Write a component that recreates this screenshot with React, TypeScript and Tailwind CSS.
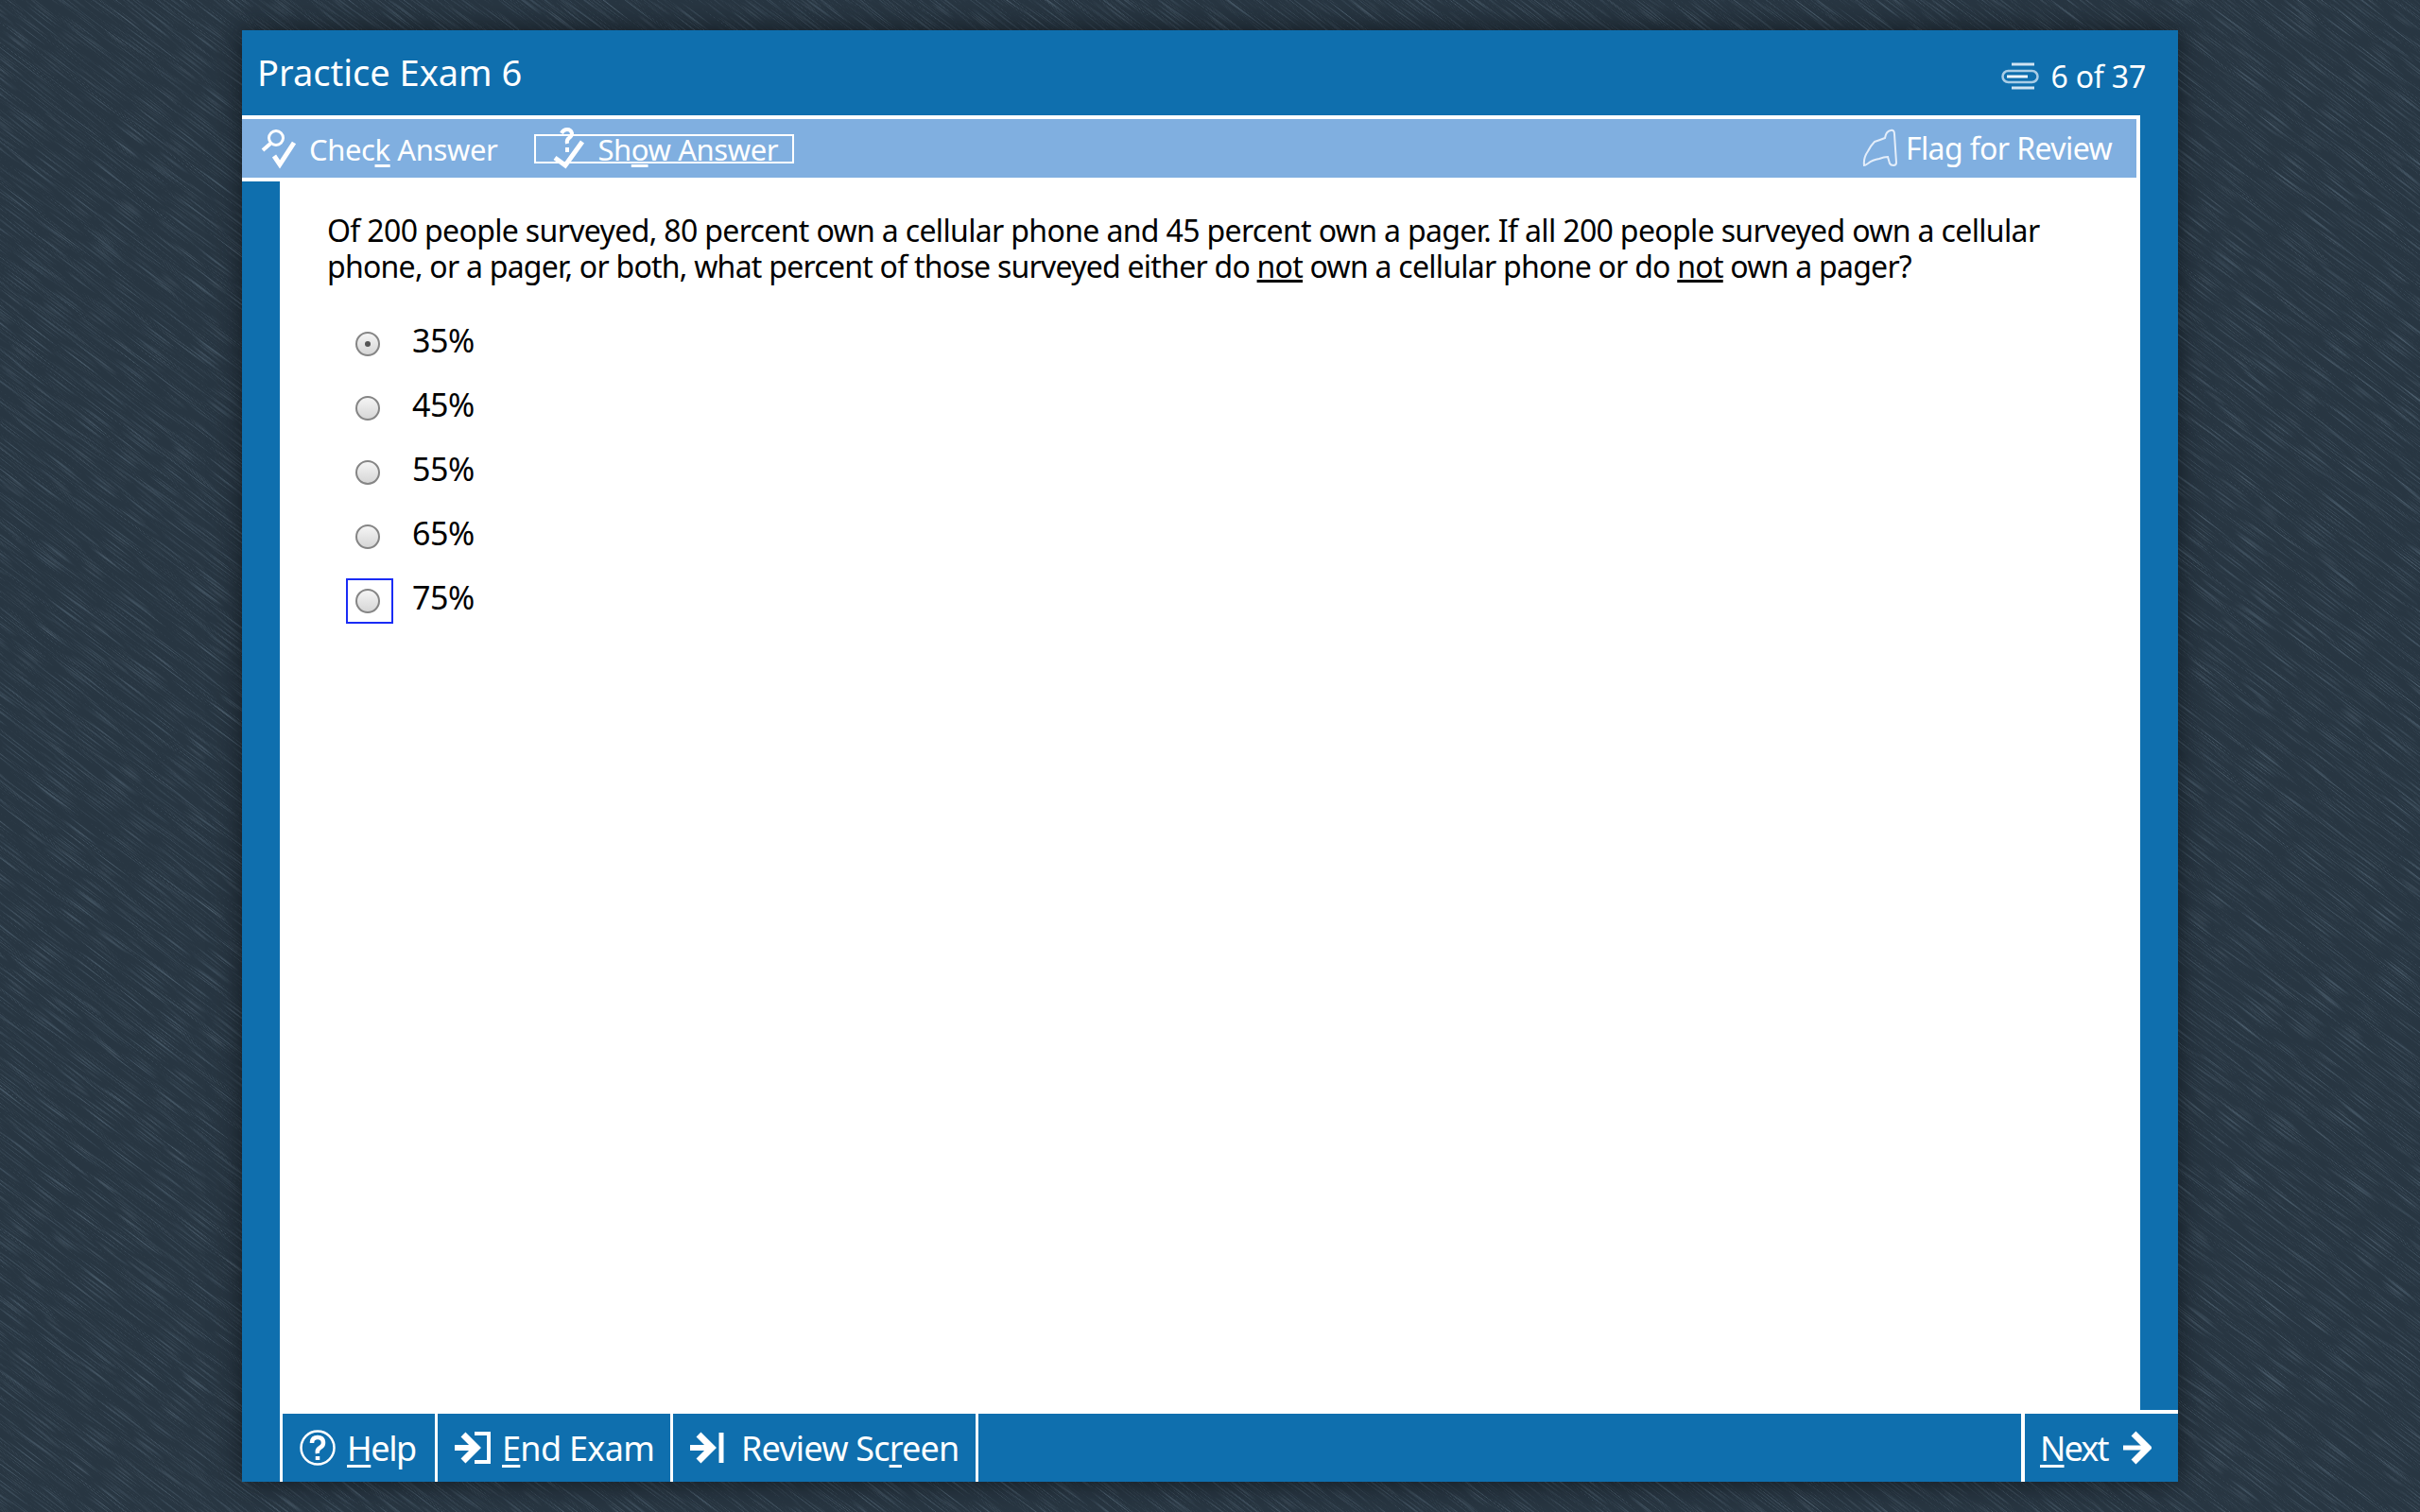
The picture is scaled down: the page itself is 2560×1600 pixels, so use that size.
const FONT = "font-['Noto_Sans','Open_Sans',sans-serif]";

const CHOICES = ["35%", "45%", "55%", "65%", "75%"];

// brushed slate texture behind the exam window
function Backdrop() {
  return (
    <svg className="absolute inset-0 h-full w-full" aria-hidden="true">
      <defs>
        <filter id="streaks" x="0" y="0" width="100%" height="100%">
          <feTurbulence type="fractalNoise" baseFrequency="0.02 0.95" numOctaves="1" seed="7" />
          <feColorMatrix
            type="matrix"
            values="0 0 0 0 0.07  0 0 0 0 0.11  0 0 0 0 0.15  4 0 0 0 -2.1"
          />
        </filter>
        <filter id="glints" x="0" y="0" width="100%" height="100%">
          <feTurbulence type="fractalNoise" baseFrequency="0.025 0.95" numOctaves="1" seed="23" />
          <feColorMatrix
            type="matrix"
            values="0 0 0 0 0.24  0 0 0 0 0.32  0 0 0 0 0.40  3 0 0 0 -1.7"
          />
        </filter>
      </defs>
      <rect width="100%" height="100%" fill="#283642" />
      <g transform="rotate(37 1280 800)">
        <rect x="-800" y="-1400" width="4200" height="4400" filter="url(#streaks)" opacity="0.9" />
        <rect x="-800" y="-1400" width="4200" height="4400" filter="url(#glints)" opacity="0.35" />
      </g>
    </svg>
  );
}

function CheckIcon() {
  return (
    <svg width="40" height="44" viewBox="0 0 40 44" fill="none" stroke="#fff" strokeWidth="3">
      <circle cx="17" cy="11" r="7.5" />
      <path d="M11 17 3 24" strokeWidth="4" />
      <path d="M15 30l6 9L36 16" strokeWidth="5" />
    </svg>
  );
}

function ShowIcon() {
  return (
    <svg width="34" height="44" viewBox="0 0 34 44" fill="none" stroke="#fff">
      <path d="M9 6q2-4 6-4t5 4q0 3-3 5t-2 6" strokeWidth="4" />
      <path d="M15 21v5" strokeWidth="4" />
      <path d="M2 32l11 8L31 15" strokeWidth="5" />
    </svg>
  );
}

function FlagIcon() {
  return (
    <svg width="38" height="42" viewBox="0 0 38 42" fill="none" stroke="#e4eefa" strokeWidth="2">
      <path d="M2 39q-1-8 4-15 3-6 7-10 6-2 11-4 1-7 6-8 4-1 4 4l2 30q0 3-3 3-3 0-4-2l-2-7q-4 0-9 2-7 1-12 5-3 2-4 2Z" />
    </svg>
  );
}

function StackIcon() {
  return (
    <svg width="40" height="30" viewBox="0 0 40 30" fill="none">
      <path d="M11 2h24M11 27h24" stroke="#cfe3f2" strokeWidth="3" />
      <rect x="1.5" y="9" width="37" height="12" rx="6" stroke="#a9cde6" strokeWidth="2.5" />
      <path d="M6 15h22" stroke="#eef6fb" strokeWidth="3" />
    </svg>
  );
}

function HelpIcon() {
  return (
    <svg width="38" height="38" viewBox="0 0 38 38" fill="none" stroke="#fff">
      <circle cx="19" cy="19" r="17.5" strokeWidth="2.5" />
      <path d="M13 14q0-6 6-6t6 6q0 3-3.500 5T19 25" strokeWidth="4.500" />
      <path d="M19 28v4" strokeWidth="4.500" />
    </svg>
  );
}

function EndIcon() {
  return (
    <svg width="38" height="34" viewBox="0 0 38 34" fill="none" stroke="#fff">
      <path d="M0 17h21" strokeWidth="6" />
      <path d="M9 3l14 14L9 31" strokeWidth="7" />
      <path d="M21 2h15v30H21" strokeWidth="4" />
    </svg>
  );
}

function ReviewIcon() {
  return (
    <svg width="36" height="34" viewBox="0 0 36 34" fill="none" stroke="#fff" className="mr-[6px]">
      <path d="M0 17h22" strokeWidth="6" />
      <path d="M9 3l14 14L9 31" strokeWidth="7" />
      <path d="M33 1v32" strokeWidth="5" />
    </svg>
  );
}

function NextIcon() {
  return (
    <svg width="30" height="36" viewBox="0 0 30 36" fill="none" stroke="#fff">
      <path d="M0 18h26" strokeWidth="5" />
      <path d="M11 3l15 15-15 15" strokeWidth="7" />
    </svg>
  );
}

function Radio({ checked }: { checked?: boolean }) {
  return (
    <span className="flex h-[26px] w-[26px] items-center justify-center rounded-full border-2 border-[#858585] bg-linear-to-b from-[#f5f5f5] to-[#d6d6d6]">
      {checked ? <span className="h-[6px] w-[6px] rounded-full bg-[#555]" /> : null}
    </span>
  );
}

function Choice({ label, index }: { label: string; index: number }) {
  return (
    <div className="flex h-[68px] items-center">
      <div
        className={
          index === 4
            ? "flex h-[48px] w-[50px] items-center justify-center border-2 border-[#1a2cf5] pr-[4px]"
            : "flex h-[48px] w-[50px] items-center justify-center pr-[4px]"
        }
      >
        <Radio checked={index === 0} />
      </div>
      <span className="-mt-[8px] ml-[20px] text-[34px] leading-none tracking-[-0.4px] text-black">{label}</span>
    </div>
  );
}

function FooterButton({
  icon,
  width,
  tracking,
  children,
}: {
  icon: React.ReactNode;
  width: string;
  tracking: string;
  children: React.ReactNode;
}) {
  return (
    <div className={`flex h-full items-center gap-[12px] border-l-[3px] border-white pl-[18px] ${width}`}>
      {icon}
      <span className={`mt-[2px] text-[36px] leading-none whitespace-nowrap text-white ${tracking}`}>{children}</span>
    </div>
  );
}

export default function App() {
  return (
    <div className={`relative flex h-[1600px] w-[2560px] justify-center overflow-hidden pt-[32px] ${FONT}`}>
      <Backdrop />
      <div className="relative flex h-[1536px] w-[2048px] flex-col bg-[#0f6fae] shadow-[0_0_26px_rgba(10,16,22,0.75)]">
        <header className="flex h-[90px] items-center justify-between pl-[16px] pr-[34px]">
          <span className="-mt-[2px] text-[38px] leading-none text-white">Practice Exam 6</span>
          <span className="mt-[8px] flex items-center gap-[12px]">
            <StackIcon />
            <span className="text-[32px] leading-none tracking-[-0.2px] text-white">6 of 37</span>
          </span>
        </header>

        <div className="mr-[40px] flex h-[70px] items-center justify-between border-t-4 border-r-4 border-b-4 border-white bg-[#80afe0] pr-[26px] pl-[19px] text-[31px] tracking-[-0.4px] text-white">
          <div className="flex items-center">
            <CheckIcon />
            <span className="mt-[3px] ml-[12px] leading-none whitespace-nowrap">
              Chec<span className="underline underline-offset-4">k</span> Answer
            </span>
            <div className="ml-[39px] flex h-[31px] w-[275px] items-center border-2 border-white pl-[18px]">
              <ShowIcon />
              <span className="mt-[3px] ml-[13px] leading-none whitespace-nowrap">
                Sh<span className="underline underline-offset-4">o</span>w Answer
              </span>
            </div>
          </div>
          <div className="flex items-center gap-[8px]">
            <FlagIcon />
            <span className="text-[32px] leading-none tracking-[-0.6px] whitespace-nowrap">Flag for Review</span>
          </div>
        </div>

        <div className="flex min-h-0 flex-1 px-[40px]">
          <main className="flex-1 bg-white pt-[33px] pl-[50px]">
            <p className="text-[32px] leading-[38px] tracking-[-0.65px] whitespace-nowrap text-black">
              Of 200 people surveyed, 80 percent own a cellular phone and 45 percent own a pager. If all 200 people surveyed own a cellular
              <br />
              <span className="tracking-[-0.75px]">
                phone, or a pager, or both, what percent of those surveyed either do <span className="underline">not</span> own a cellular phone or do <span className="underline">not</span> own a pager?
              </span>
            </p>
            <div className="mt-[29px] ml-[20px] flex flex-col">
              {CHOICES.map((c, i) => (
                <Choice key={c} label={c} index={i} />
              ))}
            </div>
          </main>
        </div>

        <footer className="flex h-[72px] items-stretch pl-[40px]">
          <FooterButton icon={<HelpIcon />} width="w-[164px]" tracking="tracking-[-1.4px]">
            <span className="underline underline-offset-4">H</span>elp
          </FooterButton>
          <FooterButton icon={<EndIcon />} width="w-[249px]" tracking="tracking-[-0.7px]">
            <span className="underline underline-offset-4">E</span>nd Exam
          </FooterButton>
          <FooterButton icon={<ReviewIcon />} width="w-[323px]" tracking="tracking-[-0.8px]">
            Review Sc<span className="underline underline-offset-4">r</span>een
          </FooterButton>
          <div className="flex-1 border-l-[3px] border-white" />
          <div className="-mt-[4px] flex h-[76px] w-[166px] items-center gap-[16px] border-t-4 border-l-4 border-white pl-[16px]">
            <span className="mt-[2px] text-[36px] leading-none tracking-[-1.8px] whitespace-nowrap text-white">
              <span className="underline underline-offset-4">N</span>ext
            </span>
            <NextIcon />
          </div>
        </footer>
      </div>
    </div>
  );
}
